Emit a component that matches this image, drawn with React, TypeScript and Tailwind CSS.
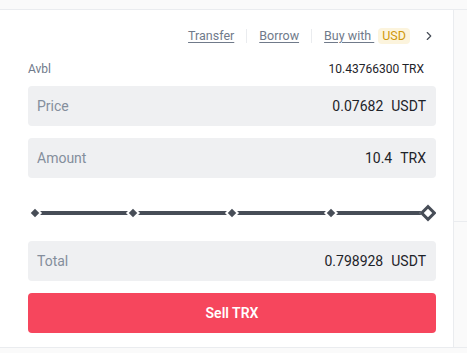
import { ChevronRight } from 'lucide-react';

const Slider = () => {
  const marks = [7, 105, 204, 303];
  return (
    <svg width="408" height="20" viewBox="0 0 408 20" className="block">
      <line x1="7" y1="10" x2="393" y2="10" stroke="#474d57" strokeWidth="4" />
      {marks.map((x) => (
        <g key={x}>
          <rect x={x - 5} y={5} width="10" height="10" fill="#fff" transform={`rotate(45 ${x} 10)`} />
          <rect x={x - 3} y={7} width="6" height="6" fill="#474d57" transform={`rotate(45 ${x} 10)`} />
        </g>
      ))}
      <rect x={394} y={4} width="12" height="12" fill="#fff" transform="rotate(45 400 10)" />
      <rect x={395.5} y={5.5} width="9" height="9" fill="#fff" stroke="#474d57" strokeWidth="3" transform="rotate(45 400 10)" />
    </svg>
  );
};

const Field = ({ label, value, unit }: { label: string; value: string; unit: string }) => (
  <div className="h-[40px] rounded bg-[#eff0f2] flex items-center px-[9px] pr-[10px] text-[14px]">
    <span className="text-[#848e9c] flex-1">{label}</span>
    <span className="text-[#1e2329]">{value}</span>
    <span className="text-[#1e2329] ml-[8px]">{unit}</span>
  </div>
);

export default function App() {
  return (
    <div
      className="w-[467px] h-[353px] bg-[#fafafa] flex flex-col overflow-hidden"
      style={{ fontFamily: 'Roboto, "Liberation Sans", sans-serif' }}
    >
      <div className="h-[10px] border-b border-[#eaecef]" />
      <div className="flex h-[337px]">
        <div className="w-[453px] bg-white pl-[28px] pr-[17px] flex flex-col">
          <div className="mt-[16px] h-[20px] flex items-center justify-end text-[12.5px] text-[#707a8a]">
            <span className="underline underline-offset-2">Transfer</span>
            <span className="w-px h-[14px] bg-[#eaecef] mx-[12px]" />
            <span className="underline underline-offset-2">Borrow</span>
            <span className="w-px h-[14px] bg-[#eaecef] mx-[12px]" />
            <span className="underline underline-offset-2 whitespace-pre">Buy with </span>
            <span className="ml-[4px] h-[16px] px-[4px] rounded-sm bg-[#fcf4dd] text-[#d0980b] flex items-center">USD</span>
            <ChevronRight size={14} strokeWidth={2} className="ml-[12px] text-[#474d57]" />
          </div>
          <div className="mt-[15px] h-[16px] flex items-center justify-between text-[12px]">
            <span className="text-[#707a8a]">Avbl</span>
            <span className="text-[#1e2329] mr-[12px]">10.43766300 TRX</span>
          </div>
          <div className="mt-[9px]">
            <Field label="Price" value="0.07682" unit="USDT" />
          </div>
          <div className="mt-[12px]">
            <Field label="Amount" value="10.4" unit="TRX" />
          </div>
          <div className="mt-[25px] mb-[18px]">
            <Slider />
          </div>
          <Field label="Total" value="0.798928" unit="USDT" />
          <button className="mt-[12px] h-[40px] rounded bg-[#f6465d] text-white text-[14px] font-semibold">
            Sell TRX
          </button>
        </div>
        <div className="flex-1 border-l border-[#eaecef] bg-[#fafafa] flex flex-col">
          <div className="h-[212px] border-b border-[#eaecef]" />
        </div>
      </div>
      <div className="flex-1 border-t border-[#eaecef]" />
    </div>
  );
}
